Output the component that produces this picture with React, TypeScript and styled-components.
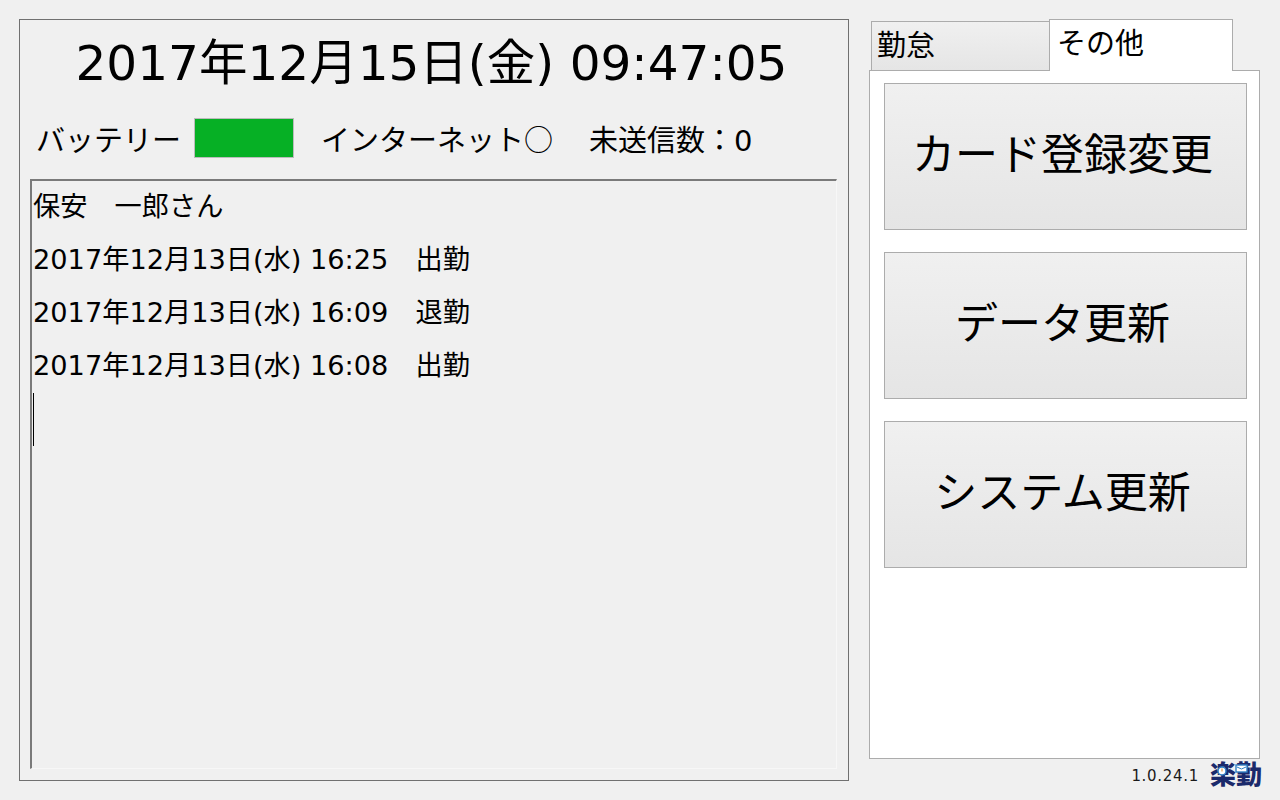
import React from "react";
import styled, { createGlobalStyle } from "styled-components";

const GlobalStyle = createGlobalStyle`
  html, body {
    margin: 0;
    padding: 0;
    background: #f0f0f0;
  }
  body {
    font-family: "DejaVu Sans", "Noto Sans CJK JP", sans-serif;
    color: #000;
  }
`;

const Screen = styled.div`
  box-sizing: border-box;
  width: 1280px;
  height: 800px;
  padding: 19px 20px 0 19px;
  display: flex;
  align-items: flex-start;
  gap: 20px;
  background: #f0f0f0;
  overflow: hidden;
`;

const ClockPanel = styled.section`
  box-sizing: border-box;
  width: 830px;
  height: 762px;
  border: 1px solid #707070;
  padding: 10px 11px 11px 10px;
  display: flex;
  flex-direction: column;
`;

const DateTime = styled.div`
  box-sizing: border-box;
  height: 68px;
  padding-right: 4px;
  font-size: 48.5px;
  line-height: 66px;
  text-align: center;
  white-space: nowrap;
`;

const StatusBar = styled.div`
  box-sizing: border-box;
  height: 81px;
  display: flex;
  align-items: center;
  padding: 0 0 2px 6px;
  font-size: 29px;
  white-space: nowrap;
`;

const StatusLabel = styled.span<{ $gap?: number }>`
  margin-right: ${(p) => p.$gap ?? 0}px;
`;

const CjkGlyph = styled.span`
  font-family: "Noto Sans CJK JP", sans-serif;
`;

const BatteryBar = styled.div`
  box-sizing: border-box;
  width: 100px;
  height: 40px;
  margin-right: 27px;
  background: #06b025;
  border: 1px solid #bcbcbc;
`;

const LogBox = styled.div`
  box-sizing: border-box;
  flex: 1;
  border-style: solid;
  border-width: 2px 1px 1px 2px;
  border-color: #7a7a7a #f7f7f7 #f7f7f7 #7a7a7a;
  padding: 0 0 0 1px;
  font-size: 27.2px;
`;

const LogLine = styled.div`
  height: 53px;
  line-height: 51px;
  white-space: pre;
`;

const Caret = styled.div`
  width: 1px;
  height: 53px;
  background: #000;
`;

const SidePanel = styled.section`
  width: 391px;
  display: flex;
  flex-direction: column;
`;

const TabRow = styled.div`
  height: 52px;
  padding-left: 2px;
  display: flex;
  align-items: flex-end;
  margin-bottom: -1px;
  position: relative;
`;

const Tab = styled.div<{ $active?: boolean }>`
  box-sizing: border-box;
  width: ${(p) => (p.$active ? 184 : 180)}px;
  height: ${(p) => (p.$active ? 52 : 50)}px;
  margin-left: ${(p) => (p.$active ? -2 : 0)}px;
  border: 1px solid #acacac;
  border-bottom: ${(p) => (p.$active ? "none" : "1px solid #acacac")};
  background: ${(p) => (p.$active ? "#fff" : "linear-gradient(#f0f0f0, #e5e5e5)")};
  padding-left: ${(p) => (p.$active ? 7 : 5)}px;
  font-family: "Noto Sans CJK JP", sans-serif;
  font-size: 29px;
  line-height: 42px;
  white-space: nowrap;
  z-index: ${(p) => (p.$active ? 1 : 0)};
`;

const TabBody = styled.div`
  box-sizing: border-box;
  height: 689px;
  background: #fff;
  border: 1px solid #acacac;
  padding: 12px 12px 0 14px;
  display: flex;
  flex-direction: column;
  gap: 22px;
`;

const ActionButton = styled.button`
  box-sizing: border-box;
  width: 363px;
  height: 147px;
  padding: 0 6px 12px 0;
  border: 1px solid #acacac;
  background: linear-gradient(#f0f0f0, #e5e5e5);
  font-family: "Noto Sans CJK JP", sans-serif;
  font-size: 43px;
  color: #000;
  white-space: nowrap;
`;

const Footer = styled.div`
  height: 33px;
  display: flex;
  align-items: center;
  justify-content: flex-end;
  gap: 11px;
`;

const Version = styled.span`
  font-size: 15px;
  letter-spacing: 0.7px;
  color: #1a1a1a;
`;

const LogoWrap = styled.div`
  position: relative;
  width: 52px;
  height: 26px;
  margin-right: -2px;
  font-family: "Noto Sans CJK JP", sans-serif;
  font-size: 26px;
  line-height: 20px;
  font-weight: 900;
  color: #1b2a6b;
  white-space: nowrap;
`;

const LogoClock = styled.svg`
  position: absolute;
  left: 7px;
  top: 3px;
`;

const LogoMail = styled.svg`
  position: absolute;
  left: 25px;
  top: 1px;
`;

const logLines = [
  "保安　一郎さん",
  "2017年12月13日(水) 16:25　出勤",
  "2017年12月13日(水) 16:09　退勤",
  "2017年12月13日(水) 16:08　出勤",
];

const actions = ["カード登録変更", "データ更新", "システム更新"];

export default function App() {
  return (
    <Screen>
      <GlobalStyle />
      <ClockPanel>
        <DateTime>2017年12月15日(金) 09:47:05</DateTime>
        <StatusBar>
          <StatusLabel $gap={13}>バッテリー</StatusLabel>
          <BatteryBar />
          <StatusLabel $gap={36}>
            インターネット<CjkGlyph>○</CjkGlyph>
          </StatusLabel>
          <StatusLabel>未送信数：0</StatusLabel>
        </StatusBar>
        <LogBox>
          {logLines.map((line) => (
            <LogLine key={line}>{line}</LogLine>
          ))}
          <Caret />
        </LogBox>
      </ClockPanel>
      <SidePanel>
        <TabRow>
          <Tab>勤怠</Tab>
          <Tab $active>その他</Tab>
        </TabRow>
        <TabBody>
          {actions.map((label) => (
            <ActionButton key={label}>{label}</ActionButton>
          ))}
        </TabBody>
        <Footer>
          <Version>1.0.24.1</Version>
          <LogoWrap>
            楽勤
            <LogoClock width="10" height="10" viewBox="0 0 10 10">
              <circle cx="5" cy="5" r="4" fill="#fff" stroke="#2f7fc4" strokeWidth="1.5" />
              <path d="M5 2.5V5.5" stroke="#e08a1e" strokeWidth="1" />
            </LogoClock>
            <LogoMail width="13" height="9" viewBox="0 0 13 9">
              <rect x="1" y="1" width="11" height="7" fill="#fff" stroke="#2f7fc4" strokeWidth="1.4" />
              <path d="M2 3l4.5 2 4.5-2" fill="none" stroke="#2f7fc4" strokeWidth="1" />
            </LogoMail>
          </LogoWrap>
        </Footer>
      </SidePanel>
    </Screen>
  );
}
